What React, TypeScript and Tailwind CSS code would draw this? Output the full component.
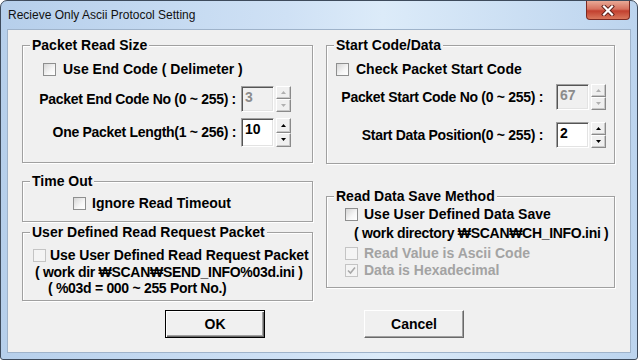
import type { ReactNode } from "react";
import clsx from "clsx";

function Check(props: { checked?: boolean; disabled?: boolean }) {
  return (
    <span
      className={clsx(
        "relative inline-block h-[13px] w-[13px] shrink-0 border",
        props.disabled
          ? "border-[#c4c4c4] bg-[#f4f4f4]"
          : "border-[#8e8f8f] bg-[linear-gradient(135deg,#d6d6d6,#f6f6f6_60%,#ffffff)]",
      )}
    >
      {props.checked ? (
        <svg viewBox="0 0 11 11" className="absolute left-0 top-0 h-[11px] w-[11px]">
          <path d="M2 5.5 L4.5 8 L9 2.5" fill="none" stroke={props.disabled ? "#a8a8a8" : "#222"} strokeWidth="1.6" />
        </svg>
      ) : null}
    </span>
  );
}

function Arrow(props: { up?: boolean; disabled?: boolean }) {
  return (
    <svg viewBox="0 0 5 3" className="h-[3px] w-[5px]">
      <polygon
        points={props.up ? "2.5,0 5,3 0,3" : "0,0 5,0 2.5,3"}
        fill={props.disabled ? "#b0b0b0" : "#000"}
      />
    </svg>
  );
}

function Spin(props: { value: string; disabled?: boolean; tall?: boolean }) {
  const raised =
    "flex flex-1 items-center justify-center border border-t-white border-l-white border-r-[#8a8a8a] border-b-[#8a8a8a] bg-[#f0f0f0] shadow-[inset_-1px_-1px_0_#c8c8c8]";
  return (
    <div className={clsx("flex shrink-0", props.tall ? "h-[29px]" : "h-[26px]")}>
      <div
        className={clsx(
          "w-[33px] border border-t-[#a0a0a0] border-l-[#a0a0a0] border-r-white border-b-white pl-[3px] pt-[2px] shadow-[inset_1px_1px_0_#555,inset_-1px_-1px_0_#e3e3e3]",
          props.disabled ? "bg-[#f0f0f0] text-[#8c8c8c]" : "bg-white text-black",
        )}
      >
        {props.value}
      </div>
      <div className="ml-[2px] flex w-[15px] flex-col">
        <div className={raised}>
          <Arrow up disabled={props.disabled} />
        </div>
        <div className={raised}>
          <Arrow disabled={props.disabled} />
        </div>
      </div>
    </div>
  );
}

function Group(props: { title: string; className: string; children: ReactNode }) {
  return (
    <div
      className={clsx(
        "relative border border-[#a0a0a0] shadow-[inset_1px_1px_0_#fff,1px_1px_0_#fff]",
        props.className,
      )}
    >
      <span className="absolute -top-[9px] left-[7px] whitespace-nowrap bg-[#f0f0f0] px-[2px] leading-[16px]">
        {props.title}
      </span>
      {props.children}
    </div>
  );
}

export default function App() {
  return (
    <div className="h-[360px] w-[638px] bg-white font-['Liberation_Sans',Arial,sans-serif]">
      <div className="flex h-[360px] w-[638px] flex-col rounded-t-[7px] rounded-b-[3px] border border-[#3e4b5c] bg-[linear-gradient(90deg,#b6cfeb_0%,#cfe1f5_45%,#dcebf9_60%,#bcd4ee_100%)]">
        <div className="flex h-[28px] items-start justify-between">
          <div className="self-center pl-[7px] text-[12px] text-[#111]">Recieve Only Ascii Protocol Setting</div>
          <div className="mr-[7px] flex h-[19px] w-[44px] items-center justify-center rounded-b-[4px] border border-t-0 border-[#7b2a22] bg-[linear-gradient(180deg,#e9a996_0%,#d6715e_45%,#c2402f_55%,#d9775c_100%)]">
            <svg viewBox="0 0 14 11" className="h-[11px] w-[14px]">
              <path d="M3 1.5 L11 9.5 M11 1.5 L3 9.5" stroke="#5a1d17" strokeWidth="4" strokeLinecap="square" />
              <path d="M3 1.5 L11 9.5 M11 1.5 L3 9.5" stroke="#fff" strokeWidth="2.2" strokeLinecap="square" />
            </svg>
          </div>
        </div>
        <div className="mx-[6px] mb-[6px] flex h-[324px] flex-col whitespace-nowrap border border-[#9fb3ca] bg-[#f0f0f0] text-[14px] font-bold leading-[17px] text-black">
          <div className="flex gap-[13px] pl-[14px] pt-[15px]">
            <div className="flex w-[291px] flex-col">
              <Group title="Packet Read Size" className="h-[118px]">
                <div className="mt-[15px] flex h-[17px] items-center pl-[20px]">
                  <Check />
                  <span className="ml-[7px]">Use End Code ( Delimeter )</span>
                </div>
                <div className="mt-[8px] flex items-center justify-end pr-[21px]">
                  <span className="mr-[5px] tracking-[-0.3px]">Packet End Code No (0 ~ 255) :</span>
                  <Spin value="3" disabled />
                </div>
                <div className="mt-[6px] flex items-center justify-end pr-[21px]">
                  <span className="mr-[5px] tracking-[-0.3px]">One Packet Length(1 ~ 256) :</span>
                  <Spin value="10" tall />
                </div>
              </Group>
              <Group title="Time Out" className="mt-[18px] h-[41px]">
                <div className="mt-[13px] flex h-[17px] items-center pl-[50px]">
                  <Check />
                  <span className="ml-[6px]">Ignore Read Timeout</span>
                </div>
              </Group>
              <Group title="User Defined Read Request Packet" className="mt-[10px] h-[69px]">
                <div className="mt-[14px] flex h-[17px] items-center pl-[10px]">
                  <Check disabled />
                  <span className="ml-[4px] tracking-[-0.1px]">Use User Defined Read Request Packet</span>
                </div>
                <div className="h-[16px] pl-[12px] leading-[16px] tracking-[-0.3px]">( work dir ₩SCAN₩SEND_INFO%03d.ini )</div>
                <div className="h-[16px] pl-[25px] leading-[16px] tracking-[-0.3px]">( %03d = 000 ~ 255 Port No.)</div>
              </Group>
            </div>
            <div className="flex w-[289px] flex-col">
              <Group title="Start Code/Data" className="h-[119px]">
                <div className="mt-[15px] flex h-[17px] items-center pl-[9px]">
                  <Check />
                  <span className="ml-[7px]">Check Packet Start Code</span>
                </div>
                <div className="mt-[6px] flex items-center justify-end pr-[8px]">
                  <span className="mr-[13px] tracking-[-0.3px]">Packet Start Code No (0 ~ 255) :</span>
                  <Spin value="67" disabled />
                </div>
                <div className="mt-[12px] flex items-center justify-end pr-[8px]">
                  <span className="mr-[13px] tracking-[-0.3px]">Start Data Position(0 ~ 255) :</span>
                  <Spin value="2" />
                </div>
              </Group>
              <Group title="Read Data Save Method" className="mt-[32px] h-[92px]">
                <div className="mt-[9px] flex h-[17px] items-center pl-[18px]">
                  <Check />
                  <span className="ml-[6px]">Use User Defined Data Save</span>
                </div>
                <div className="mt-[2px] h-[17px] pl-[27px] tracking-[-0.3px]">( work directory ₩SCAN₩CH_INFO.ini )</div>
                <div className="mt-[3px] flex h-[17px] items-center pl-[18px] text-[#a3a3a3]">
                  <Check disabled />
                  <span className="ml-[6px]">Read Value is Ascii Code</span>
                </div>
                <div className="flex h-[17px] items-center pl-[18px] text-[#a3a3a3]">
                  <Check checked disabled />
                  <span className="ml-[6px]">Data is Hexadecimal</span>
                </div>
              </Group>
            </div>
          </div>
          <div className="mt-[9px] flex gap-[99px] pl-[157px]">
            <button className="h-[28px] w-[100px] border border-black bg-[#f0f0f0] font-bold shadow-[inset_1px_1px_0_#fff,inset_-1px_-1px_0_#696969,inset_-2px_-2px_0_#a0a0a0]">
              OK
            </button>
            <button className="h-[28px] w-[100px] border border-t-white border-l-white border-r-[#696969] border-b-[#696969] bg-[#f0f0f0] font-bold shadow-[inset_-1px_-1px_0_#a0a0a0]">
              Cancel
            </button>
          </div>
        </div>
      </div>
    </div>
  );
}
